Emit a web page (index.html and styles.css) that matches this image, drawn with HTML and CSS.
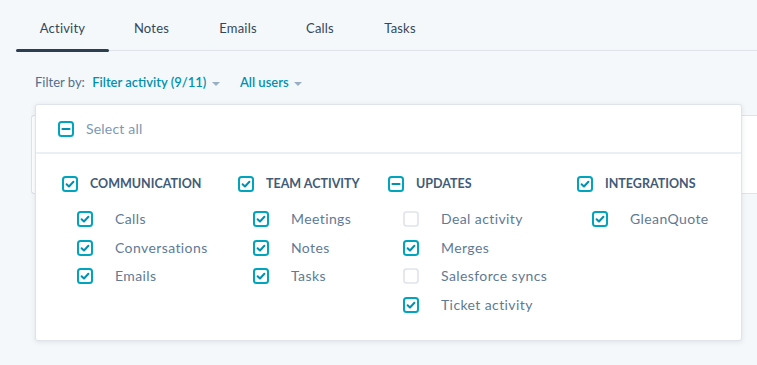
FILE: index.html
```html
<!DOCTYPE html>
<html>
<head>
	<link rel="stylesheet" href="styles.css">
</head>
<body>
	<div class="tabs">
		<div class="tab active">Activity</div>
		<div class="tab">Notes</div>
		<div class="tab">Emails</div>
		<div class="tab">Calls</div>
		<div class="tab">Tasks</div>
	</div>

	<div class="filters">
		<span class="filter-label">Filter by:</span>
		<span class="filter-link">Filter activity (9/11) <span class="caret"></span></span>
		<span class="filter-link users">All users <span class="caret"></span></span>

		<div class="dropdown">
			<div class="select-all">
				<span class="box minus"></span>
				<span class="select-text">Select all</span>
			</div>
			<div class="groups">
				<div class="group g1">
					<div class="group-head"><span class="box on"></span>COMMUNICATION</div>
					<div class="item"><span class="box on"></span>Calls</div>
					<div class="item"><span class="box on"></span>Conversations</div>
					<div class="item"><span class="box on"></span>Emails</div>
				</div>
				<div class="group g2">
					<div class="group-head"><span class="box on"></span>TEAM ACTIVITY</div>
					<div class="item"><span class="box on"></span>Meetings</div>
					<div class="item"><span class="box on"></span>Notes</div>
					<div class="item"><span class="box on"></span>Tasks</div>
				</div>
				<div class="group g3">
					<div class="group-head"><span class="box minus"></span>UPDATES</div>
					<div class="item"><span class="box"></span>Deal activity</div>
					<div class="item"><span class="box on"></span>Merges</div>
					<div class="item"><span class="box"></span>Salesforce syncs</div>
					<div class="item"><span class="box on"></span>Ticket activity</div>
				</div>
				<div class="group g4">
					<div class="group-head"><span class="box on"></span>INTEGRATIONS</div>
					<div class="item"><span class="box on"></span>GleanQuote</div>
				</div>
			</div>
		</div>
	</div>

	<div class="card"></div>

	<script>
		var check = '<svg width="16" height="16" viewBox="0 0 16 16"><rect x="1" y="1" width="14" height="14" rx="2.5" fill="#fff" stroke="#00a4bd" stroke-width="2"/><path d="M4.6 8.2 L7 10.5 L11.4 5.8" fill="none" stroke="#0091ae" stroke-width="2" stroke-linecap="round" stroke-linejoin="round"/></svg>';
		var minus = '<svg width="16" height="16" viewBox="0 0 16 16"><rect x="1" y="1" width="14" height="14" rx="2.5" fill="#fff" stroke="#00a4bd" stroke-width="2"/><path d="M4.5 8 L11.5 8" fill="none" stroke="#0091ae" stroke-width="2.2" stroke-linecap="round"/></svg>';
		var empty = '<svg width="16" height="16" viewBox="0 0 16 16"><rect x="1" y="1" width="14" height="14" rx="2.5" fill="#fff" stroke="#dfe3eb" stroke-width="1.6"/></svg>';

		Array.prototype.forEach.call(document.querySelectorAll(".box"), function (box) {
			if (box.classList.contains("on")) {
				box.innerHTML = check;
			} else if (box.classList.contains("minus")) {
				box.innerHTML = minus;
			} else {
				box.innerHTML = empty;
			}
		});
	</script>
</body>
</html>
```

FILE: styles.css
```css
body {
	margin: 0;
	background: #f5f8fa;
	font-family: Lato, "Open Sans", sans-serif;
	color: #33475b;
	height: 365px;
	overflow: hidden;
}

.tabs {
	display: flex;
	margin: 0 0 0 16px;
	padding-top: 18px;
	border-bottom: 1px solid #dfe3eb;
	height: 32px;
}

.tab {
	font-size: 13px;
	color: #33475b;
	text-align: center;
	position: relative;
	height: 32px;
	line-height: 20px;
	letter-spacing: 0.2px;
}

.tab:nth-child(1) { width: 93px; }
.tab:nth-child(2) { width: 85px; }
.tab:nth-child(3) { width: 88px; }
.tab:nth-child(4) { width: 76px; }
.tab:nth-child(5) { width: 84px; }

.tab.active::after {
	content: "";
	position: absolute;
	left: 0;
	right: 0;
	bottom: -2px;
	height: 3px;
	border-radius: 2px;
	background: #2d3e50;
}

.filters {
	position: relative;
	padding: 21px 0 0 35px;
	height: 20px;
	font-size: 13px;
	line-height: 20px;
}

.filter-label {
	color: #516f90;
	margin-right: 4px;
}

.filter-link {
	color: #0091ae;
	font-weight: 600;
}

.filter-link.users {
	margin-left: 17px;
}

.caret {
	display: inline-block;
	width: 0;
	height: 0;
	margin-left: 2px;
	border-left: 4px solid transparent;
	border-right: 4px solid transparent;
	border-top: 4px solid #99afc4;
	vertical-align: middle;
}

.card {
	margin: 23px 0 0 31px;
	height: 77px;
	background: #fff;
	border: 1px solid #dfe3eb;
	border-right: none;
	border-radius: 3px 0 0 3px;
}

.dropdown {
	position: absolute;
	top: 53px;
	left: 35px;
	width: 705px;
	height: 235px;
	background: #fff;
	border: 1px solid #dfe3eb;
	border-radius: 3px;
	box-shadow: 0 1px 5px rgba(45, 62, 80, 0.12);
	z-index: 2;
}

.box {
	display: inline-block;
	width: 16px;
	height: 16px;
	vertical-align: middle;
}

.box svg {
	display: block;
}

.select-all {
	height: 47px;
	border-bottom: 2px solid #eaf0f6;
	display: flex;
	align-items: center;
	padding-left: 22px;
}

.select-text {
	margin-left: 12px;
	font-size: 14px;
	color: #7c98b6;
	letter-spacing: 0.2px;
}

.groups {
	display: flex;
	padding: 22px 0 0 26px;
}

.g1 { width: 176px; }
.g2 { width: 150px; }
.g3 { width: 189px; }

.group-head {
	display: flex;
	align-items: center;
	font-size: 12.5px;
	font-weight: 700;
	color: #425b76;
	height: 16px;
	margin-bottom: 13px;
}

.group-head .box {
	margin-right: 12px;
}

.item {
	display: flex;
	align-items: center;
	height: 28.6px;
	padding-left: 15px;
	font-size: 14px;
	color: #5f7a95;
	letter-spacing: 0.4px;
}

.item .box {
	margin-right: 22px;
}
```
